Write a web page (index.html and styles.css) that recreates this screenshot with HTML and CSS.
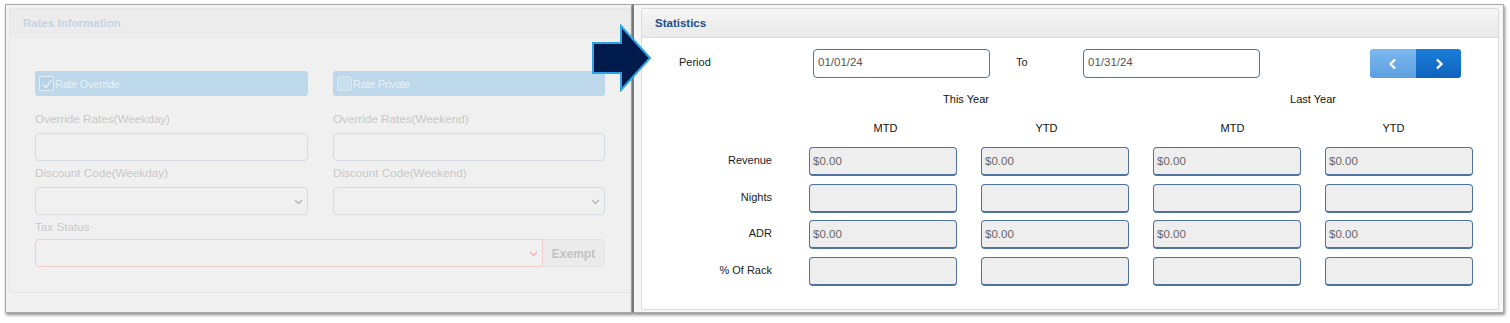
FILE: index.html
```html
<!DOCTYPE html>
<html>
<head>
    <title>Rates and Statistics</title>
    <link rel="stylesheet" href="styles.css">
</head>
<body>
    <div class="canvas">
        <div class="shot shot-left">
            <div class="panel faded">
                <div class="panel-head">Rates Information</div>
                <div class="panel-body rates">
                    <div class="rates-grid">
                        <div class="check-bar">
                            <span class="box checked">
                                <svg width="12" height="12" viewBox="0 0 12 12"><path d="M2 6.5 L5 9.5 L10.5 2" fill="none" stroke="#e6eef5" stroke-width="1.6"/></svg>
                            </span>Rate Override
                        </div>
                        <div class="check-bar"><span class="box"></span>Rate Private</div>

                        <div class="field">
                            <div class="field-label">Override Rates(Weekday)</div>
                            <div class="field-input"></div>
                        </div>
                        <div class="field">
                            <div class="field-label">Override Rates(Weekend)</div>
                            <div class="field-input"></div>
                        </div>

                        <div class="field">
                            <div class="field-label">Discount Code(Weekday)</div>
                            <div class="field-input select">
                                <svg class="chev" width="9" height="6" viewBox="0 0 9 6"><path d="M1 1 L4.5 4.5 L8 1" fill="none" stroke="#b5b5b5" stroke-width="1.3"/></svg>
                            </div>
                        </div>
                        <div class="field">
                            <div class="field-label">Discount Code(Weekend)</div>
                            <div class="field-input select">
                                <svg class="chev" width="9" height="6" viewBox="0 0 9 6"><path d="M1 1 L4.5 4.5 L8 1" fill="none" stroke="#b5b5b5" stroke-width="1.3"/></svg>
                            </div>
                        </div>

                        <div class="field wide">
                            <div class="field-label">Tax Status</div>
                            <div class="tax-group">
                                <div class="field-input select tax">
                                    <svg class="chev" width="9" height="6" viewBox="0 0 9 6"><path d="M1 1 L4.5 4.5 L8 1" fill="none" stroke="#f0b2b2" stroke-width="1.3"/></svg>
                                </div>
                                <div class="addon">Exempt</div>
                            </div>
                        </div>
                    </div>
                </div>
            </div>
        </div>

        <div class="shot shot-right">
            <div class="panel">
                <div class="panel-head stats-head">Statistics</div>
                <div class="panel-body stats">
                    <div class="period-row">
                        <span class="period-label">Period</span>
                        <div class="date-input">01/01/24</div>
                        <span class="to-label">To</span>
                        <div class="date-input">01/31/24</div>
                        <div class="nav-group">
                            <button class="nav-btn prev">
                                <svg width="10" height="12" viewBox="0 0 10 12"><path d="M7 1.5 L2.5 6 L7 10.5" fill="none" stroke="#fff" stroke-width="2.4"/></svg>
                            </button>
                            <button class="nav-btn next">
                                <svg width="10" height="12" viewBox="0 0 10 12"><path d="M3 1.5 L7.5 6 L3 10.5" fill="none" stroke="#fff" stroke-width="2.4"/></svg>
                            </button>
                        </div>
                    </div>

                    <div class="year-row">
                        <span></span>
                        <span>This Year</span>
                        <span></span>
                        <span>Last Year</span>
                    </div>
                    <div class="col-row">
                        <span></span>
                        <span>MTD</span>
                        <span>YTD</span>
                        <span></span>
                        <span>MTD</span>
                        <span>YTD</span>
                    </div>

                    <div class="stat-rows">
                        <div class="stat-row">
                            <span class="row-label">Revenue</span>
                            <div class="stat-input">$0.00</div>
                            <div class="stat-input">$0.00</div>
                            <div class="stat-input">$0.00</div>
                            <div class="stat-input">$0.00</div>
                        </div>
                        <div class="stat-row">
                            <span class="row-label">Nights</span>
                            <div class="stat-input"></div>
                            <div class="stat-input"></div>
                            <div class="stat-input"></div>
                            <div class="stat-input"></div>
                        </div>
                        <div class="stat-row">
                            <span class="row-label">ADR</span>
                            <div class="stat-input">$0.00</div>
                            <div class="stat-input">$0.00</div>
                            <div class="stat-input">$0.00</div>
                            <div class="stat-input">$0.00</div>
                        </div>
                        <div class="stat-row">
                            <span class="row-label">% Of Rack</span>
                            <div class="stat-input"></div>
                            <div class="stat-input"></div>
                            <div class="stat-input"></div>
                            <div class="stat-input"></div>
                        </div>
                    </div>
                </div>
            </div>
        </div>

        <!-- callout arrow pointing at the statistics panel -->
        <svg class="pointer" width="64" height="68" viewBox="0 0 64 68">
            <polygon points="3,19 31,19 31,2 60,34 31,66 31,49 3,49" fill="#001a4c" stroke="#2aa4e8" stroke-width="2"/>
        </svg>
    </div>
</body>
</html>
```

FILE: styles.css
```css
body {
    margin: 0;
    background-color: #fff;
    font-family: 'Liberation Sans', Arial, sans-serif;
    font-size: 11px;
    color: #1c1c1c;
}

.canvas {
    position: relative;
    display: flex;
    padding: 4px 0 0 5px;
    width: 1510px;
    height: 323px;
    box-sizing: border-box;
}

.shot {
    height: 309px;
    box-sizing: border-box;
    border: 1px solid #a9a9a9;
    box-shadow: 1px 2px 3px rgba(0, 0, 0, 0.45);
    overflow: hidden;
}

.shot-left {
    width: 627px;
    background-color: #f1f1f1;
    padding: 3px 0 0 3px;
}

.shot-right {
    width: 872px;
    background-color: #f6f6f6;
    padding: 3px 4px 0 7px;
    border-left: 2px solid #7a7a7a;
    position: relative;
    z-index: 1;
}

.panel {
    border: 1px solid #dcdcdc;
    border-radius: 2px;
    background-color: #fff;
    box-sizing: border-box;
}

.shot-right .panel {
    height: 302px;
}

.panel-head {
    height: 29px;
    line-height: 28px;
    padding-left: 13px;
    font-weight: bold;
    font-size: 11.5px;
    background: linear-gradient(#f6f6f6, #e9e9e9);
    border-bottom: 1px solid #dedede;
    box-sizing: border-box;
}

.stats-head {
    color: #1c4f8e;
}

/* ---------- left, faded screenshot ---------- */

.faded {
    width: 640px;
    height: 285px;
    background-color: #f0f0f0;
    border-color: #e6e6e6;
}

.faded .panel-head {
    color: #c6d4e4;
    background: #ececec;
    border-bottom: none;
}

.rates {
    padding: 33px 0 0 25px;
}

.rates-grid {
    display: grid;
    grid-template-columns: 273px 272px;
    column-gap: 25px;
}

.check-bar {
    height: 25px;
    display: flex;
    align-items: center;
    padding-left: 4px;
    background-color: #bcd8ea;
    border-radius: 3px;
    color: #e8eff5;
    font-size: 11px;
    letter-spacing: -0.3px;
}

.box {
    width: 13px;
    height: 13px;
    margin-right: 1px;
    border: 1px solid #d8e6f0;
    border-radius: 2px;
    background-color: #c8dfee;
    display: flex;
    align-items: center;
    justify-content: center;
}

.box.checked {
    background-color: #b5d2e6;
    border-color: #e4edf4;
}

.field {
    margin-top: 16px;
}

.field-label {
    height: 14px;
    line-height: 14px;
    color: #c9c9c9;
    font-size: 11.7px;
    margin-bottom: 7px;
}

.field-input {
    height: 28px;
    box-sizing: border-box;
    border: 1px solid #d5dce4;
    border-radius: 4px;
    background-color: #f0f0f0;
    position: relative;
}

.field:nth-child(n+5) {
    margin-top: 5px;
}

.chev {
    position: absolute;
    right: 4px;
    top: 11px;
}

.wide {
    grid-column: 1 / 3;
}

.wide .field-label {
    margin-bottom: 5px;
}

.tax-group {
    display: flex;
}

.tax {
    width: 508px;
    border-color: #f1cdcd;
    border-radius: 4px 0 0 4px;
}

.addon {
    width: 62px;
    height: 28px;
    line-height: 28px;
    box-sizing: border-box;
    text-align: center;
    font-weight: bold;
    font-size: 12px;
    color: #c3c3c3;
    background-color: #ebebeb;
    border: 1px solid #e4e4e4;
    border-left: none;
    border-radius: 0 4px 4px 0;
}

/* ---------- statistics panel ---------- */

.stats {
    padding: 11px 0 0 37px;
}

.period-row {
    display: flex;
    align-items: center;
    height: 29px;
}

.period-label,
.to-label {
    margin-top: -3px;
}

.period-label {
    width: 134px;
}

.to-label {
    width: 93px;
    padding-left: 26px;
    box-sizing: border-box;
}

.date-input {
    width: 177px;
    height: 29px;
    line-height: 25px;
    box-sizing: border-box;
    padding-left: 4px;
    border: 1px solid #4f73a0;
    border-radius: 4px;
    color: #555;
    font-size: 11.5px;
}

.nav-group {
    display: flex;
    margin-left: 110px;
    height: 29px;
    border-radius: 3px;
    overflow: hidden;
}

.nav-btn {
    width: 46px;
    height: 29px;
    border: none;
    padding: 0;
    display: flex;
    align-items: center;
    justify-content: center;
}

.prev {
    background: linear-gradient(#7bb8ee, #5d9fe0);
}

.next {
    width: 45px;
    background: linear-gradient(#1b7ed9, #0e63bd);
}

.year-row,
.col-row {
    display: grid;
    text-align: center;
    height: 14px;
    line-height: 14px;
    color: #111;
}

.year-row {
    grid-template-columns: 126px 322px 25px 322px;
    margin-top: 14px;
}

.col-row {
    grid-template-columns: 126px 161px 161px 25px 161px 161px;
    margin-top: 15px;
}

.stat-rows {
    margin-top: 12px;
    display: flex;
    flex-direction: column;
    gap: 7.5px;
}

.stat-row {
    display: grid;
    grid-template-columns: 106px 148px 148px 148px 148px;
    column-gap: 24px;
    align-items: center;
    height: 29px;
}

.row-label {
    text-align: right;
    padding-right: 13px;
    margin-top: -3px;
}

.stat-input {
    height: 29px;
    line-height: 27px;
    box-sizing: border-box;
    padding-left: 3px;
    border: 1px solid #4f73a0;
    border-bottom-width: 2px;
    border-radius: 4px;
    background-color: #eeeeee;
    color: #666;
    font-size: 11.5px;
}

.pointer {
    position: absolute;
    left: 590px;
    top: 24px;
    z-index: 2;
}
```
